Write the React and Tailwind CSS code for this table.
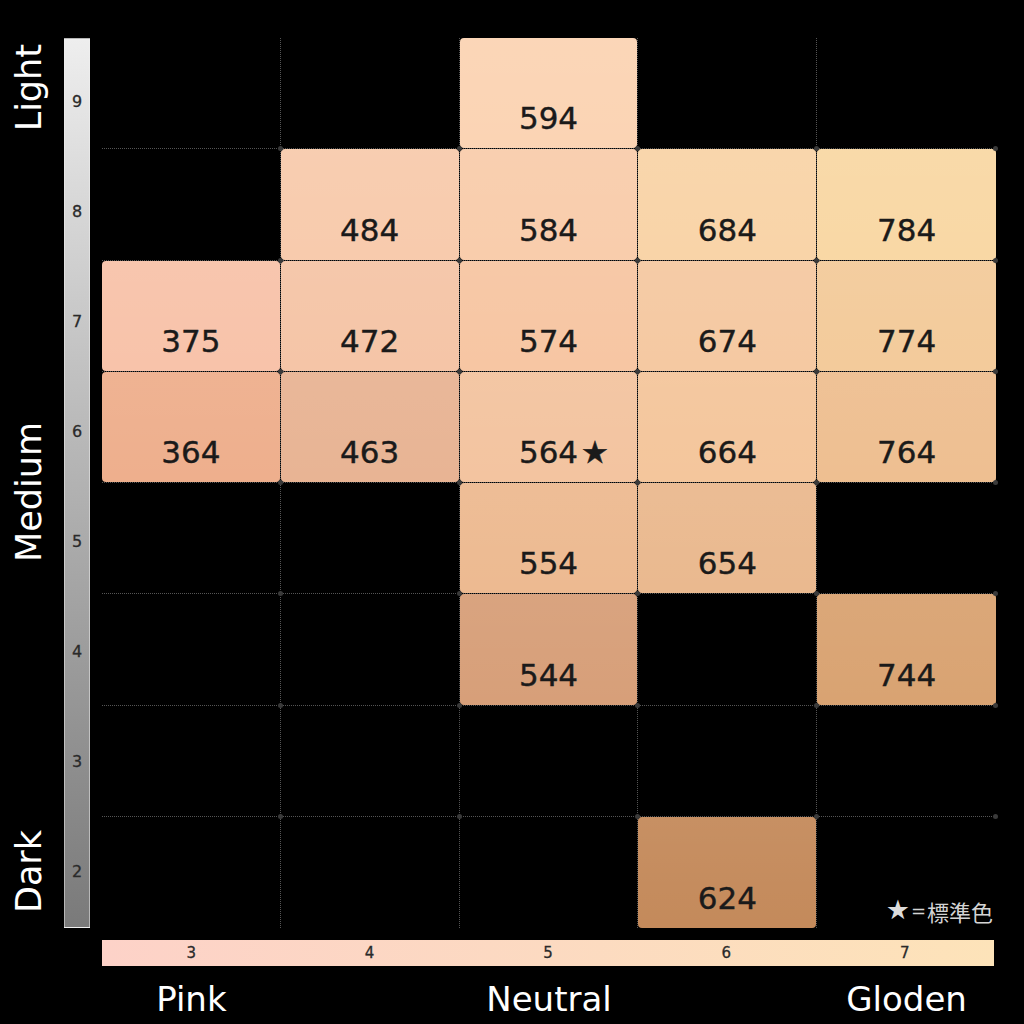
import React from "react";

const ROWS = [9, 8, 7, 6, 5, 4, 3, 2];
const COLS = [3, 4, 5, 6, 7];

const CELLS = {
  "9-5": { n: "594", c: "bg-[#fbd4b4]" },
  "8-4": { n: "484", c: "bg-[#f8cbad]" },
  "8-5": { n: "584", c: "bg-[#f9cdac]" },
  "8-6": { n: "684", c: "bg-[#f9d4a8]" },
  "8-7": { n: "784", c: "bg-[#f9d8a5]" },
  "7-3": { n: "375", c: "bg-[#f8c3aa]" },
  "7-4": { n: "472", c: "bg-[#f5c5a7]" },
  "7-5": { n: "574", c: "bg-[#f7c6a3]" },
  "7-6": { n: "674", c: "bg-[#f5c9a2]" },
  "7-7": { n: "774", c: "bg-[#f3cb9b]" },
  "6-3": { n: "364", c: "bg-[#eeaf8d]" },
  "6-4": { n: "463", c: "bg-[#e8b494]" },
  "6-5": { n: "564", c: "bg-[#f3c4a0]", star: true },
  "6-6": { n: "664", c: "bg-[#f4c69c]" },
  "6-7": { n: "764", c: "bg-[#eebf91]" },
  "5-5": { n: "554", c: "bg-[#edba91]" },
  "5-6": { n: "654", c: "bg-[#eab98f]" },
  "4-5": { n: "544", c: "bg-[#d79f79]" },
  "4-7": { n: "744", c: "bg-[#d9a372]" },
  "2-6": { n: "624", c: "bg-[#c48a5b]" },
};

const GRID_W = 894;
const GRID_H = 890;

function Dots() {
  const dots = [];
  for (let r = 1; r <= 7; r++) {
    for (let c = 1; c <= 5; c++) {
      dots.push(
        <div
          key={`${r}-${c}`}
          className="absolute w-[5px] h-[5px] rounded-full bg-[#3a3a3a]"
          style={{
            left: (GRID_W * c) / 5 - 3,
            top: (GRID_H * r) / 8 - 3,
          }}
        />
      );
    }
  }
  return <>{dots}</>;
}

function VText({ children, className = "" }) {
  return (
    <span className={`[writing-mode:vertical-rl] rotate-180 whitespace-nowrap ${className}`}>
      {children}
    </span>
  );
}

export default function App() {
  return (
    <div className="w-[1024px] h-[1024px] bg-black overflow-hidden font-['DejaVu_Sans','Noto_Sans_CJK_JP',sans-serif]">
      <div className="flex pt-[38px]">
        {/* side labels */}
        <div className="w-[58px] h-[890px] flex flex-col items-center pt-[6px] pb-[15px] text-white text-[35px] leading-none">
          <VText>Light</VText>
          <VText className="mt-[291px]">Medium</VText>
          <VText className="mt-auto">Dark</VText>
        </div>

        {/* vertical scale bar */}
        <div className="ml-[6px] w-[26px] h-[890px] border border-[#f2f2f2]/50 bg-linear-to-b from-[#eeeeee] to-[#7a7a7a] flex flex-col pt-[8px]">
          {ROWS.map((r) => (
            <div
              key={r}
              className="flex-1 flex items-center justify-center text-[16px] leading-none text-[#2a2a2a] [-webkit-text-stroke:0.3px_#2a2a2a]"
            >
              {r}
            </div>
          ))}
        </div>

        {/* chart grid */}
        <div className="ml-[12px] relative w-[894px] h-[890px] grid grid-cols-5 grid-rows-8">
          {ROWS.map((r, ri) =>
            COLS.map((c, ci) => {
              const cell = CELLS[`${r}-${c}`];
              const br = ci < 4 ? "border-r" : "";
              const bb = ri < 7 ? "border-b" : "";
              return (
                <div
                  key={`${r}-${c}`}
                  className={`${br} ${bb} border-dotted border-[#555555]`}
                >
                  {cell ? (
                    <div
                      className={`${cell.c} bg-[linear-gradient(to_bottom,rgba(255,255,255,0.05),rgba(255,255,255,0))] w-full h-full rounded-[4px] flex items-end justify-center pb-[14px]`}
                    >
                      <span className="relative text-[31px] leading-none text-[#1a1a1a] [-webkit-text-stroke:0.4px_#1a1a1a]">
                        {cell.n}
                        {cell.star ? (
                          <span className="absolute left-full bottom-0 ml-[3px] text-[31px] leading-none text-[#1a1a1a]">
                            ★
                          </span>
                        ) : null}
                      </span>
                    </div>
                  ) : r === 2 && c === 7 ? (
                    <div className="w-full h-full flex items-end justify-end pb-[5px] pr-[3px] leading-none text-[#d4d4d4]">
                      <span className="text-[27px] text-[#dcdcdc]">★</span>
                      <span className="text-[18px] mx-[1px] mb-[3px]">=</span>
                      <span className="text-[22px] mb-[1px] font-['Noto_Sans_CJK_JP',sans-serif]">標準色</span>
                    </div>
                  ) : null}
                </div>
              );
            })
          )}
          <Dots />
        </div>
      </div>

      {/* horizontal scale bar */}
      <div className="ml-[102px] mt-[12px] w-[892px] h-[26px] bg-linear-to-r from-[#fdd2c8] via-[#fcdac1] to-[#fde3b9] grid grid-cols-5">
        {COLS.map((c) => (
          <div
            key={c}
            className="flex items-center justify-center text-[15px] leading-none text-[#2a2a2a] [-webkit-text-stroke:0.3px_#2a2a2a]"
          >
            {c}
          </div>
        ))}
      </div>

      {/* bottom labels */}
      <div className="ml-[102px] mt-[16px] w-[894px] grid grid-cols-5 text-white text-[34px] leading-none">
        <div className="text-center">Pink</div>
        <div />
        <div className="text-center">Neutral</div>
        <div />
        <div className="text-center">Gloden</div>
      </div>
    </div>
  );
}
